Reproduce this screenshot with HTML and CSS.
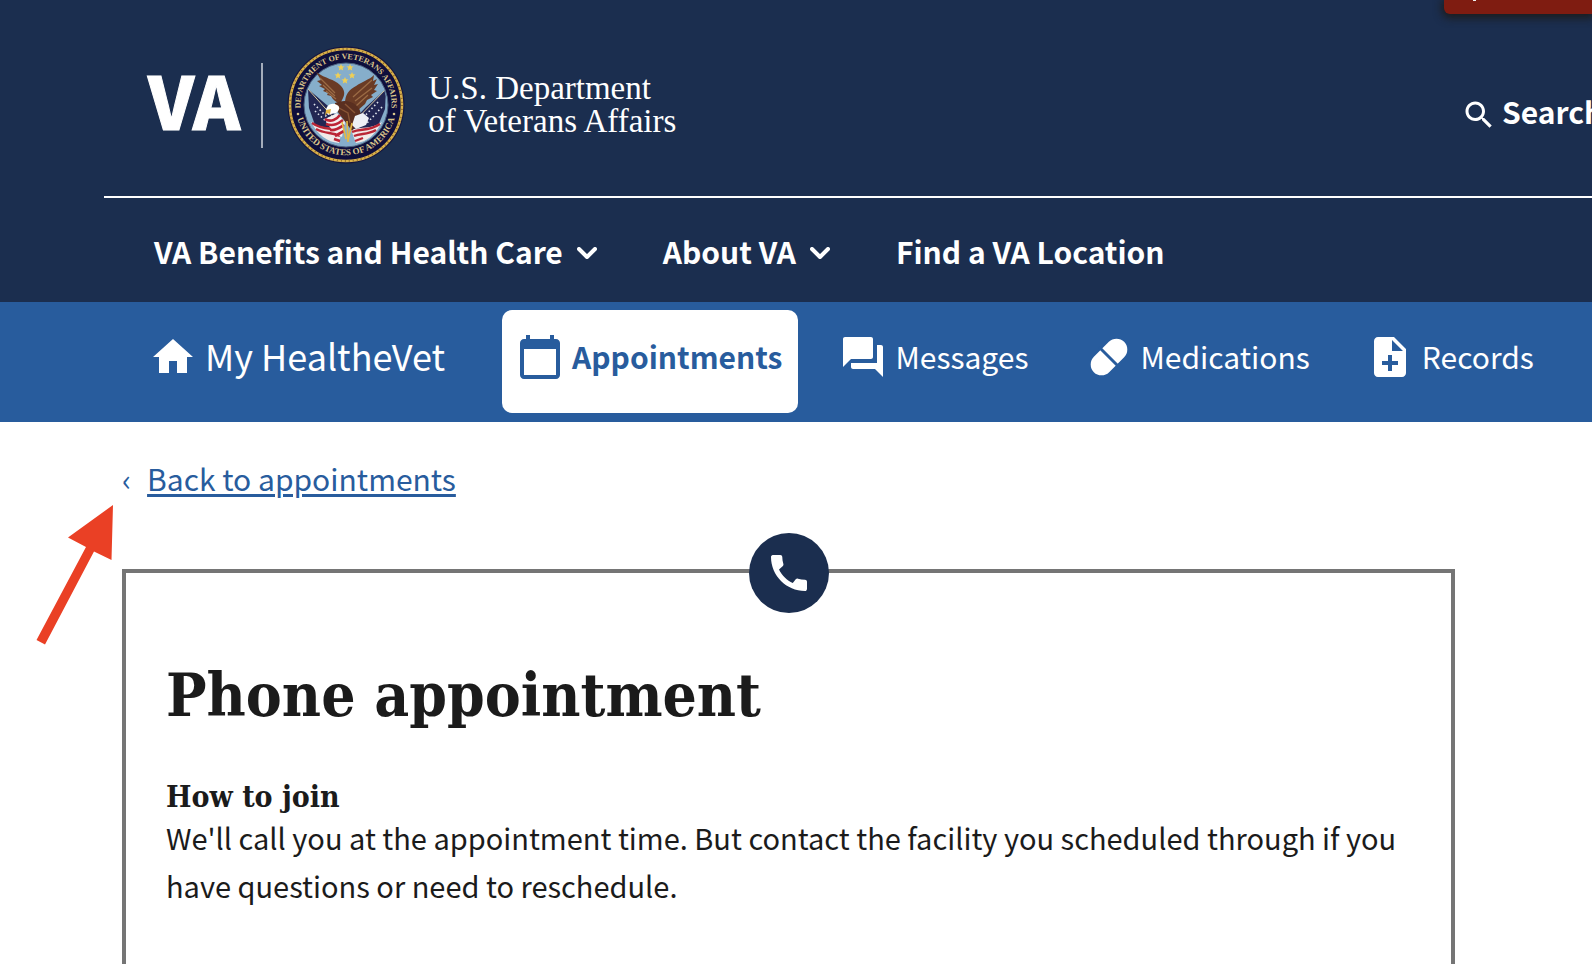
FILE: index.html
```html
<!DOCTYPE html>
<html lang="en">
<head>
<meta charset="utf-8">
<title>Phone appointment | Veterans Affairs</title>
<link rel="stylesheet" href="styles.css">
</head>
<body>
<header class="site-header">
  <div class="alert-tab"></div>
  <div class="brand-row">
    <a class="brand" href="#" aria-label="VA home">
      <span class="brand-va">VA</span>
      <span class="brand-rule"></span>
      <svg class="seal" viewBox="0 0 118 118" role="img" aria-label="Department of Veterans Affairs seal">
        <defs>
          <path id="arc-top" d="M14.500 68 A45.500 45.500 0 1 1 103.500 68"/>
          <path id="arc-bottom" d="M10 71 A50.500 50.500 0 0 0 108 71"/>
          <clipPath id="disc"><circle cx="59" cy="59" r="41"/></clipPath>
        </defs>
        <circle cx="59" cy="59" r="58.500" fill="#15153d"/>
        <circle cx="59" cy="59" r="56" fill="#0f0f3c" stroke="#d9b04a" stroke-width="2.600"/>
        <circle cx="59" cy="59" r="56" fill="none" stroke="#8d6a2a" stroke-width="2" stroke-dasharray="1 3"/>
        <circle cx="59" cy="59" r="42" fill="#86aecb" stroke="#4f6583" stroke-width="1"/>
        <g class="seal-text">
          <text><textPath href="#arc-top" startOffset="50%" text-anchor="middle">DEPARTMENT OF VETERANS AFFAIRS</textPath></text>
          <text class="seal-text-lower"><textPath href="#arc-bottom" startOffset="50%" text-anchor="middle">UNITED STATES OF AMERICA</textPath></text>
        </g>
        <circle cx="11" cy="68" r="1.300" fill="#dcc68c"/>
        <circle cx="107" cy="68" r="1.300" fill="#dcc68c"/>
        <g fill="#f0cf55">
          <path id="star" d="M54 18l1 2.300 2.500.2-1.900 1.600.6 2.400-2.200-1.300-2.200 1.300.6-2.400-1.900-1.600 2.500-.2z"/>
          <use href="#star" x="9"/><use href="#star" x="-3" y="8"/><use href="#star" x="11" y="8"/><use href="#star" x="4" y="13"/>
        </g>
        <g clip-path="url(#disc)">
          <path d="M21 43l20 17 14 17-1 12-26-10-6-17z" fill="#222653"/>
          <path d="M99 43L79 61 64 77l2 12 25-9 7-17z" fill="#222653"/>
          <path d="M21 43l34 38M99 43L64 79" stroke="#d9c9a0" stroke-width="1"/>
          <path d="M27 58l20 20M28 65l15 14M91 56L74 74M95 61L80 77" stroke="#dfe3ed" stroke-width="1.600" stroke-dasharray="1.500 2.500"/>
          <path d="M24 76c12 8 20 4 31 8l-3 13c-12-1-21-8-28-21z" fill="#f0e9e8"/>
          <path d="M95 76c-12 8-20 4-31 8l5 13c11-1 19-8 26-21z" fill="#f0e9e8"/>
          <path d="M25 77c12 8 19 4 29 8M29 83c9 5 16 3 24 7M93 78c-12 8-19 4-28 8M89 84c-9 5-15 3-22 6M47 93l6 2M68 95l8-3" stroke="#b92636" stroke-width="2.400" fill="none"/>
        </g>
        <path d="M53 58c-4-2-7-4-9-8l-4-1 1-2-5-2 2-2-6-3 3-1-5-4 4-1-5-8c10 7 18 7 24 13 5 5 5 9 3 13z" fill="#6a3b25"/>
        <path d="M58 58c0-10 4-14 11-18 7-5 13-6 18-11l-1 6 4-2-3 6 4-1-4 6 3 1-6 4 2 2-6 3-2 4-8 7-5 7z" fill="#6a3b25"/>
        <path d="M33 32l15 15M36 39l12 11M39 45l10 8M85 34L66 51M85 42L68 55M81 49L69 60" stroke="#9b6b45" stroke-width="1.300" fill="none"/>
        <path d="M48 57c7-3 15-3 21 2 6 5 6 13 1 18l-5 8-5-7-7-9-5-7z" fill="#5a2f20"/>
        <path d="M52 62l9 5 2 10M58 58l10 9" stroke="#8a5636" stroke-width="1.400" fill="none"/>
        <path d="M39 65c0-6 6-9 11-6 4 2 2 6-1 8l-5 1-3 1z" fill="#fff"/>
        <path d="M39 64l5-1-1 5-3-1-2 3z" fill="#e7b53f"/>
        <path d="M38 73l12-6 8 9-3 15c-7-4-13-9-17-18z" fill="#f3eeee"/>
        <path d="M38 73c6 4 12 0 15-4M39 78c8 3 13-1 17-4M43 84c6 1 11-3 14-5M48 90l9-5" stroke="#bd2435" stroke-width="2.600" fill="none"/>
        <path d="M68 70l8-3 6 5-3 7-10 4-4-4z" fill="#edf0f6"/>
        <path d="M55 76l4 17M60 75l1 21M65 77l-4 18" stroke="#e4b947" stroke-width="1.600"/>
      </svg>
      <span class="brand-name">U.S. Department<br>of Veterans Affairs</span>
    </a>
    <button class="search" type="button">
      <svg class="search-icon" viewBox="0 0 24 24" aria-hidden="true"><path d="M15.500 14h-.79l-.28-.27C15.410 12.590 16 11.110 16 9.500 16 5.910 13.090 3 9.500 3S3 5.910 3 9.500 5.910 16 9.500 16c1.610 0 3.090-.59 4.230-1.570l.27.28v.79l5 4.990L20.490 19l-4.990-5zm-6 0C7.010 14 5 11.990 5 9.500S7.010 5 9.500 5 14 7.010 14 9.500 11.990 14 9.500 14z"/></svg>
      Search
    </button>
  </div>
  <nav class="main-nav" aria-label="Main">
    <button type="button">VA Benefits and Health Care
      <svg class="chevron" viewBox="0 0 20 12" aria-hidden="true"><path d="M2 2l8 8 8-8"/></svg>
    </button>
    <button type="button">About VA
      <svg class="chevron" viewBox="0 0 20 12" aria-hidden="true"><path d="M2 2l8 8 8-8"/></svg>
    </button>
    <a href="#">Find a VA Location</a>
  </nav>
</header>
<nav class="health-nav" aria-label="My HealtheVet">
  <a class="home" href="#">
    <svg viewBox="2 0 20 24" aria-hidden="true"><path d="M10 20v-6h4v6h5v-8h3L12 3 2 12h3v8z"/></svg>
    My HealtheVet</a>
  <a class="current" href="#" aria-current="page">
    <svg viewBox="2 0 20 24" aria-hidden="true"><path d="M20 3h-1V1h-2v2H7V1H5v2H4c-1.100 0-2 .9-2 2v16c0 1.100.9 2 2 2h16c1.100 0 2-.9 2-2V5c0-1.100-.9-2-2-2zm0 18H4V8h16v13z"/></svg>
    Appointments</a>
  <a class="messages" href="#">
    <svg viewBox="2 0 20 24" aria-hidden="true"><path d="M21 6h-2v9H6v2c0 .55.45 1 1 1h11l4 4V7c0-.55-.45-1-1-1zm-4 6V3c0-.55-.45-1-1-1H3c-.55 0-1 .45-1 1v14l4-4h10c.55 0 1-.45 1-1z"/></svg>
    Messages</a>
  <a class="medications" href="#">
    <svg viewBox="2 0 20 24" aria-hidden="true"><path d="M8.250 15.750l7.500-7.500" stroke="#fff" stroke-width="10.800" stroke-linecap="round"/><path d="M7 7l10 10" stroke="#285c9d" stroke-width="1.500"/></svg>
    Medications</a>
  <a class="records" href="#">
    <svg viewBox="2 0 20 24" aria-hidden="true"><path d="M14 2H6c-1.100 0-1.990.9-1.990 2L4 20c0 1.100.89 2 1.990 2H18c1.100 0 2-.9 2-2V8l-6-6zm2 14h-3v3h-2v-3H8v-2h3v-3h2v3h3v2zm-3-7V3.500L18.500 9H13z"/></svg>
    Records</a>
</nav>
<main class="content">
  <div class="back"><span class="back-mark" aria-hidden="true">‹</span><a href="#">Back to appointments</a></div>
  <section class="card">
    <span class="badge"><svg viewBox="0 0 24 24" aria-hidden="true"><path d="M20.010 15.380c-1.230 0-2.420-.2-3.530-.56-.35-.12-.74-.03-1.010.24l-1.570 1.970c-2.830-1.350-5.480-3.900-6.890-6.830l1.950-1.660c.27-.28.35-.67.24-1.020-.37-1.110-.56-2.300-.56-3.530 0-.54-.45-.99-.99-.99H4.190C3.650 3 3 3.240 3 3.990 3 13.280 10.730 21 20.010 21c.71 0 .99-.63.99-1.180v-3.450c0-.54-.45-.99-.99-.99z"/></svg></span>
    <h1>Phone appointment</h1>
    <h2>How to join</h2>
    <p>We'll call you at the appointment time. But contact the facility you scheduled through if you have questions or need to reschedule.</p>
  </section>
  <svg class="pointer" viewBox="0 0 78 141" aria-hidden="true"><path d="M77 0L32 32.500 50 42 .5 135 9 139.500 58 46.500 75.500 55z"/></svg>
</main>
</body>
</html>
```

FILE: styles.css
```css
* { box-sizing: border-box; }

html { height: 100%; overflow: hidden; }

body {
  position: relative;
  display: flex;
  flex-direction: column;
  min-height: 100%;
  margin: 0;
  background: #fff;
  color: #1b1b1b;
  font: 30px/48px "Noto Sans CJK SC", "Open Sans", sans-serif;
}

a { color: inherit; text-decoration: none; }

button {
  padding: 0;
  border: 0;
  background: none;
  color: inherit;
  font: inherit;
  cursor: pointer;
}

h1, h2, p { margin: 0; }

/* Header */
.site-header {
  padding-left: 104px;
  overflow: hidden;
  background: #1b2e4f;
  color: #fff;
}

.alert-tab {
  position: absolute;
  top: 0;
  right: 0;
  width: 148px;
  height: 14px;
  border-bottom-left-radius: 6px;
  background: #7f1c11;
  box-shadow: 0 2px 8px 2px #1c1c1c;
}

.alert-tab::before {
  content: "";
  position: absolute;
  top: 0;
  left: 29px;
  width: 3px;
  height: 1px;
  background: #eee;
}

.brand-row {
  display: flex;
  justify-content: space-between;
  padding: 46px 0 32px 44px;
  border-bottom: 2px solid #fff;
}

.brand { display: flex; align-items: center; height: 118px; }

.brand-va {
  margin-bottom: 12px;
  font-size: 72px;
  font-weight: 900;
  line-height: 106px;
  -webkit-text-stroke: 1px #fff;
}

.brand-rule {
  width: 2px;
  height: 85px;
  margin: 0 24px 0 21px;
  background: #a4adbb;
}

.seal { width: 118px; height: 118px; }

.seal-text {
  fill: #dcc68c;
  font: bold 8px "Liberation Serif", serif;
}

.seal-text-lower { font-size: 9px; }

.brand-name {
  margin-left: 23px;
  font: 33px/33px "Liberation Serif", serif;
}

.search {
  display: flex;
  flex: none;
  align-items: center;
  gap: 5px;
  width: 131px;
  height: 118px;
  padding-top: 12px;
  font-weight: 700;
  white-space: nowrap;
}

.search-icon {
  flex: none;
  width: 36px;
  height: 36px;
  margin-top: 8px;
  fill: #fff;
}

.main-nav {
  display: flex;
  gap: 66px;
  padding: 29px 50px 27px;
  font-weight: 700;
  white-space: nowrap;
}

.main-nav button { display: flex; align-items: center; gap: 14px; }

.chevron {
  width: 20px;
  height: 12px;
  margin-top: 4px;
  fill: none;
  stroke: #fff;
  stroke-width: 4;
  stroke-linecap: round;
  stroke-linejoin: round;
}

/* Section navigation */
.health-nav {
  display: flex;
  height: 120px;
  padding: 8px 0 9px 153px;
  overflow: hidden;
  background: #285c9d;
  color: #fff;
  line-height: 46px;
  white-space: nowrap;
}

.health-nav a {
  display: flex;
  flex: none;
  gap: 12px;
  padding-top: 23px;
}

.health-nav svg { flex: none; width: 40px; height: 48px; fill: currentColor; }

.health-nav .home { margin-right: 57px; font-size: 36px; line-height: 44px; }

.health-nav .current {
  padding: 23px 16px 0 18px;
  border-radius: 10px;
  background: #fff;
  color: #285c9d;
  font-weight: 700;
}

.health-nav .messages { margin-left: 45px; }
.health-nav .medications { margin-left: 60px; }
.health-nav .records { margin-left: 60px; }

/* Page content */
.content {
  position: relative;
  display: flex;
  flex: 1;
  flex-direction: column;
  padding: 32px 137px 0 122px;
}

.back { display: flex; gap: 16px; color: #285c9d; }

.back a {
  text-decoration: underline;
  text-decoration-thickness: 3px;
  text-underline-offset: 3px;
}

.card {
  position: relative;
  flex: 1;
  min-height: 395px;
  margin-top: 67px;
  padding: 82px 40px 0;
  border: 4px solid #757575;
  border-bottom: 0;
}

.badge {
  position: absolute;
  top: -40px;
  left: 50%;
  display: grid;
  place-items: center;
  width: 80px;
  height: 80px;
  margin-left: -40px;
  border-radius: 50%;
  background: #1b2e4f;
}

.badge svg { width: 48px; height: 48px; fill: #fff; }

.card h1 {
  font: bold 60px/80px "DejaVu Serif Condensed", "DejaVu Serif", serif;
  white-space: nowrap;
}

.card h2 {
  margin-top: 46px;
  font: bold 30px/32px "DejaVu Serif Condensed", "DejaVu Serif", serif;
}

.card p { font-size: 29px; }

.pointer {
  position: absolute;
  top: 83px;
  left: 36px;
  width: 78px;
  height: 141px;
  fill: #ea4025;
}
```
